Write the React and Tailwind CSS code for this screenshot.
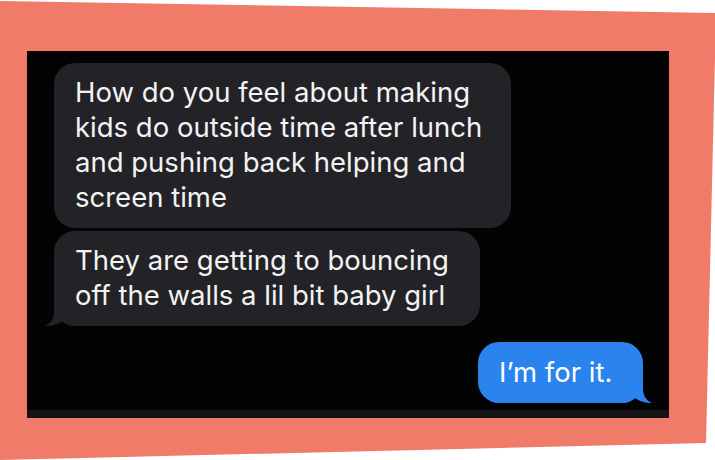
export default function App() {
  const font = { fontFamily: "Inter, 'Noto Sans', sans-serif" };
  return (
    <div className="relative w-[715px] h-[460px] bg-white overflow-hidden">
      <svg className="absolute inset-0" width="715" height="460" viewBox="0 0 715 460">
        <polygon points="0,1 716,13 706,443 0,460" fill="#F07B69" />
      </svg>
      <div className="relative ml-[27px] mt-[51px] w-[642px] h-[367px] bg-[#030303] flex flex-col" style={font}>
        <div className="ml-[27px] mt-[12px] w-[457px] rounded-[21px] bg-[#232327] pl-[21px] pt-[12px] pb-[13px] text-[27.5px] leading-[35px] text-[#f3f3f3] whitespace-nowrap">
          <div>How do you feel about making</div>
          <div>kids do outside time after lunch</div>
          <div>and pushing back helping and</div>
          <div>screen time</div>
        </div>
        <div className="relative ml-[27px] mt-[3px] w-[426px] rounded-[21px] bg-[#232327] pl-[21px] pt-[12px] pb-[13px] text-[27.5px] leading-[35px] text-[#f3f3f3] whitespace-nowrap">
          <div>They are getting to bouncing</div>
          <div>off the walls a lil bit baby girl</div>
          <svg className="absolute left-[-10px] bottom-0" width="30" height="26" viewBox="0 0 30 26">
            <path d="M10,0 L10,12 C10,19 6,24 1,26 C6,26 13,25 18,21 C21,23 24,25.5 30,26 L30,0 Z" fill="#232327" />
          </svg>
        </div>
        <div className="relative self-end mr-[26px] mt-[16px] w-[165px] rounded-[21px] bg-[#2B84EE] pl-[21px] pt-[13px] pb-[13px] text-[27.5px] leading-[35px] text-white whitespace-nowrap">
          <div>I’m for it.</div>
          <svg className="absolute right-[-10px] bottom-0" width="30" height="26" viewBox="0 0 30 26">
            <path d="M20,0 L20,12 C20,19 24,24 29,26 C24,26 17,25 12,21 C9,23 6,25.5 0,26 L0,0 Z" fill="#2B84EE" />
          </svg>
        </div>
        <div className="mt-auto h-[8px] bg-[#141416]" />
      </div>
    </div>
  );
}
